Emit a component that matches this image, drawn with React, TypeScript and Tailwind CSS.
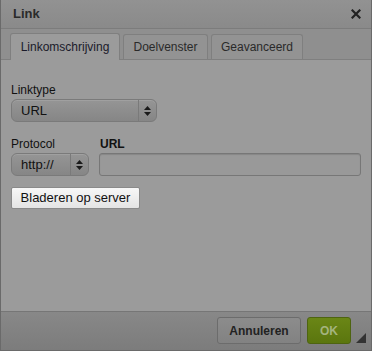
function SelectArrows() {
  return (
    <span className="flex flex-col items-center leading-none text-[#1a1a1a]">
      <svg width="7" height="4" viewBox="0 0 7 4">
        <path d="M0 4 L3.5 0 L7 4 Z" fill="currentColor" />
      </svg>
      <svg width="7" height="4" viewBox="0 0 7 4" className="mt-[2px]">
        <path d="M0 0 L3.5 4 L7 0 Z" fill="currentColor" />
      </svg>
    </span>
  );
}

function FakeSelect({value, className}: {value: string; className: string}) {
  return (
    <div
      className={`flex h-[23px] items-stretch rounded-[6px] border border-[#7a7a7a] bg-gradient-to-b from-[#959595] to-[#868686] shadow-[inset_0_1px_0_#a0a0a0] ${className}`}
    >
      <span className="flex flex-1 items-center pl-[9px] text-[13px] text-[#111]">
        {value}
      </span>
      <span className="flex w-[18px] items-center justify-center border-l border-[#7a7a7a]">
        <SelectArrows />
      </span>
    </div>
  );
}

export default function App() {
  return (
    <div
      className="flex h-[351px] w-[372px] flex-col border-x border-b border-[#6a6a6a] bg-[#9b9b9b] text-[#111]"
      style={{fontFamily: '"Liberation Sans", Arial, sans-serif'}}
    >
      <div className="flex h-[29px] shrink-0 items-center justify-between border-b border-[#7c7c7c] bg-gradient-to-b from-[#929292] to-[#8a8a8a] pl-[12px] pr-[10px]">
        <span className="text-[13px] font-bold text-[#2a2a2a]">Link</span>
        <svg width="10" height="10" viewBox="0 0 10 10">
          <path
            d="M1.5 1.5 L8.5 8.5 M8.5 1.5 L1.5 8.5"
            stroke="#222"
            strokeWidth="2.2"
            strokeLinecap="square"
          />
        </svg>
      </div>
      <div className="flex h-[31px] shrink-0 items-end gap-[3px] border-b border-[#7f7f7f] bg-[#8f8f8f] pl-[9px]">
        <div className="-mb-px flex h-[27px] w-[110px] items-center justify-center rounded-t-[3px] border border-b-0 border-[#7f7f7f] bg-[#9b9b9b] text-[12px] text-[#1a1a2a]">
          Linkomschrijving
        </div>
        <div className="flex h-[25px] w-[85px] items-center justify-center rounded-t-[3px] border border-b-0 border-[#7f7f7f] bg-[#939393] text-[12px] text-[#2a2a2a]">
          Doelvenster
        </div>
        <div className="flex h-[25px] w-[92px] items-center justify-center rounded-t-[3px] border border-b-0 border-[#7f7f7f] bg-[#939393] text-[12px] text-[#2a2a2a]">
          Geavanceerd
        </div>
      </div>
      <div className="flex flex-1 flex-col px-[10px] pt-[23px]">
        <label className="text-[12px] leading-[14px]">Linktype</label>
        <FakeSelect value="URL" className="mt-[2px] w-[146px]" />
        <div className="mt-[15px] flex gap-[10px]">
          <div className="flex flex-col">
            <label className="text-[12px] leading-[14px]">Protocol</label>
            <FakeSelect value="http://" className="mt-[2px] w-[78px]" />
          </div>
          <div className="flex flex-1 flex-col">
            <label className="pl-px text-[12px] font-bold leading-[14px]">URL</label>
            <div className="mt-[2px] h-[23px] rounded-[3px] border border-[#777] bg-[#999] shadow-[inset_0_1px_1px_rgba(0,0,0,0.12)]" />
          </div>
        </div>
        <button
          type="button"
          className="mt-[11px] h-[22px] w-[129px] rounded-[2px] border border-[#8a8a8a] bg-gradient-to-b from-[#f7f7f7] to-[#e4e4e4] text-[13px] text-[#111]"
        >
          Bladeren op server
        </button>
      </div>
      <div className="relative flex h-[39px] shrink-0 items-start justify-end gap-[6px] border-t border-[#767676] bg-gradient-to-b from-[#888] to-[#7c7c7c] pr-[20px] pt-[5px]">
        <button
          type="button"
          className="h-[27px] w-[84px] rounded-[3px] border border-[#6c6c6c] bg-gradient-to-b from-[#8c8c8c] to-[#828282] text-[12px] font-bold text-[#222]"
        >
          Annuleren
        </button>
        <button
          type="button"
          className="h-[27px] w-[44px] rounded-[3px] border border-[#4e6410] bg-gradient-to-b from-[#6a8616] to-[#5b760e] text-[12px] font-bold text-[#a4b47f]"
        >
          OK
        </button>
        <svg
          width="10"
          height="10"
          viewBox="0 0 10 10"
          className="absolute bottom-[7px] right-[5px]"
        >
          <path d="M10 0 L10 10 L0 10 Z" fill="#333" />
        </svg>
      </div>
    </div>
  );
}
